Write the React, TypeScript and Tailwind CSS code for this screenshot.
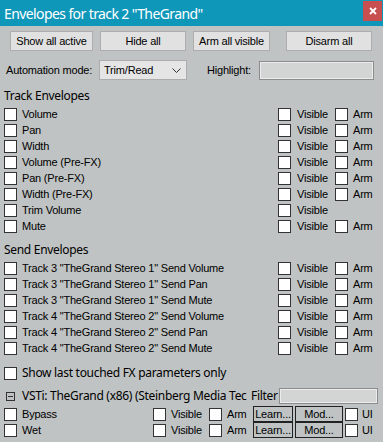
import React from "react";

const ui = "font-['Liberation_Sans',Arial,sans-serif] text-[11px] tracking-[-0.2px]";
const seg = "font-['Noto_Sans',sans-serif] text-[12px] tracking-[-0.3px]";

function Box() {
  return <span className="block w-[13px] h-[13px] border border-[#333] bg-white shrink-0" />;
}

function EnvRow({ label, visible = true, arm = true }: { label: string; visible?: boolean; arm?: boolean }) {
  return (
    <div className={`flex items-center h-[16px] pl-[4px] ${ui}`}>
      <Box />
      <span className="ml-[5px] w-[256px] whitespace-nowrap overflow-hidden">{label}</span>
      <div className="w-[57px] flex items-center">
        {visible && (
          <>
            <Box />
            <span className="ml-[6px]">Visible</span>
          </>
        )}
      </div>
      <div className="w-[48px] flex items-center">
        {arm && (
          <>
            <Box />
            <span className="ml-[5px]">Arm</span>
          </>
        )}
      </div>
    </div>
  );
}

function FxRow({ label }: { label: string }) {
  return (
    <div className={`flex items-center h-[16px] pl-[4px] ${ui}`}>
      <Box />
      <span className="ml-[5px] w-[131px]">{label}</span>
      <div className="w-[56px] flex items-center">
        <Box />
        <span className="ml-[5px]">Visible</span>
      </div>
      <div className="w-[44px] flex items-center">
        <Box />
        <span className="ml-[5px]">Arm</span>
      </div>
      <button className="w-[40px] h-[16px] border border-[#222] flex items-center justify-center leading-none">Learn...</button>
      <button className="ml-[2px] w-[48px] h-[16px] border border-[#222] flex items-center justify-center leading-none">Mod...</button>
      <span className="ml-[2px]"><Box /></span>
      <span className="ml-[4px]">UI</span>
    </div>
  );
}

export default function App() {
  const btn = "h-[20px] bg-[#e1e1e1] border border-[#adadad] flex items-center justify-center";
  const track = ["Volume", "Pan", "Width", "Volume (Pre-FX)", "Pan (Pre-FX)", "Width (Pre-FX)"];
  const sends = [
    'Track 3 "TheGrand Stereo 1" Send Volume',
    'Track 3 "TheGrand Stereo 1" Send Pan',
    'Track 3 "TheGrand Stereo 1" Send Mute',
    'Track 4 "TheGrand Stereo 2" Send Volume',
    'Track 4 "TheGrand Stereo 2" Send Pan',
    'Track 4 "TheGrand Stereo 2" Send Mute',
  ];

  return (
    <div className="w-[383px] h-[442px] bg-[#bfc3c3] text-black overflow-hidden">
      {/* title bar */}
      <div className="h-[26px] bg-[#0f97ba] flex items-center pl-[4px] relative">
        <span className="font-['Noto_Sans',sans-serif] text-[14px] text-white tracking-[-0.6px]">
          Envelopes for track 2 "TheGrand"
        </span>
        <div className="absolute right-[1px] top-[1px] w-[19px] h-[20px] bg-[#c74f50] flex items-center justify-center">
          <svg width="8" height="8" viewBox="0 0 8 8">
            <path d="M1 1L7 7M7 1L1 7" stroke="white" strokeWidth="1.8" />
          </svg>
        </div>
      </div>

      {/* buttons */}
      <div className={`flex mt-[5px] pl-[10px] ${ui}`}>
        <div className={`${btn} w-[83px]`}>Show all active</div>
        <div className={`${btn} w-[86px] ml-[7px]`}>Hide all</div>
        <div className={`${btn} w-[77px] ml-[7px]`}>Arm all visible</div>
        <div className={`${btn} w-[86px] ml-[16px]`}>Disarm all</div>
      </div>

      {/* automation mode */}
      <div className={`flex items-center mt-[9px] h-[20px] pl-[6px] ${ui}`}>
        <span className="w-[93px]">Automation mode:</span>
        <div className="w-[88px] h-[20px] bg-[#e5e5e5] border border-[#acacac] flex items-center pl-[4px] pr-[5px]">
          <span className="flex-1">Trim/Read</span>
          <svg width="9" height="5" viewBox="0 0 9 5">
            <path d="M0.5 0.5L4.5 4.5L8.5 0.5" stroke="#333" fill="none" strokeWidth="1" />
          </svg>
        </div>
        <span className="ml-[20px] w-[52px]">Highlight:</span>
        <div className="w-[115px] h-[19px] bg-[#d3d5d5] border border-[#8c8c8c] shadow-[inset_0_0_0_1px_#ececec]" />
      </div>

      {/* track envelopes */}
      <div className={`mt-[8px] h-[16px] pl-[4px] flex items-center ${seg}`}>Track Envelopes</div>
      <div className="mt-[2px]">
        {track.map((t) => (
          <EnvRow key={t} label={t} />
        ))}
        <EnvRow label="Trim Volume" arm={false} />
        <EnvRow label="Mute" />
      </div>

      {/* send envelopes */}
      <div className={`mt-[8px] h-[16px] pl-[4px] flex items-center ${seg}`}>Send Envelopes</div>
      <div className="mt-[2px]">
        {sends.map((s) => (
          <EnvRow key={s} label={s} />
        ))}
      </div>

      <div className={`mt-[9px] h-[16px] pl-[4px] flex items-center ${seg}`}>
        <Box />
        <span className="ml-[5px]">Show last touched FX parameters only</span>
      </div>

      {/* fx */}
      <div className={`mt-[7px] h-[16px] flex items-center ${seg}`}>
        <span className="ml-[6px] w-[9px] h-[9px] border border-[#333] flex items-center justify-center shrink-0">
          <span className="block w-[5px] h-[1px] bg-[#333]" />
        </span>
        <span className="ml-[7px] w-[229px] whitespace-nowrap">VSTi: TheGrand (x86) (Steinberg Media Tec</span>
        <span className="w-[28px] whitespace-nowrap">Filter</span>
        <div className="w-[99px] h-[16px] bg-[#d3d5d5] border border-[#8c8c8c] shadow-[inset_0_0_0_1px_#ececec]" />
      </div>
      <div className="mt-[2px]">
        <FxRow label="Bypass" />
        <FxRow label="Wet" />
      </div>
    </div>
  );
}
